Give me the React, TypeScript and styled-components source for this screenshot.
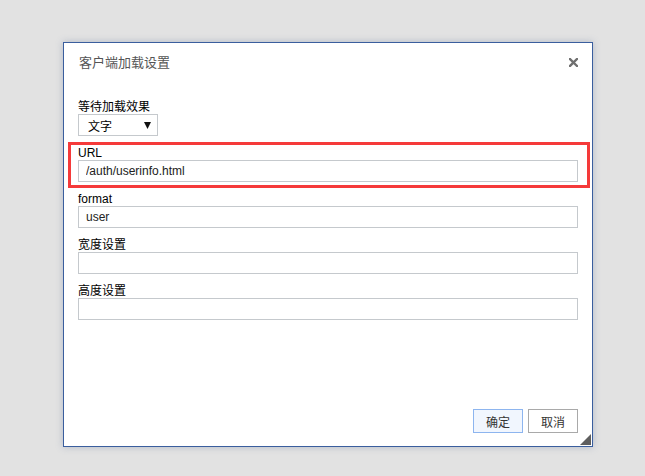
import React from 'react';
import styled, { createGlobalStyle } from 'styled-components';

const GlobalStyle = createGlobalStyle`
  html, body {
    margin: 0;
    padding: 0;
    background: #e2e2e2;
  }
  body {
    width: 645px;
    height: 476px;
    overflow: hidden;
    font-family: "Liberation Sans", Arial, "Noto Sans CJK SC", sans-serif;
  }
`;

const Page = styled.div`
  padding: 42px 0 0 63px;
`;

const Dialog = styled.div`
  position: relative;
  box-sizing: border-box;
  width: 530px;
  height: 405px;
  background: #fff;
  border: 1px solid #3a5e9e;
  box-shadow: 0 0 7px rgba(90, 110, 150, 0.35);
  display: flex;
  flex-direction: column;
`;

const Header = styled.div`
  display: flex;
  align-items: center;
  justify-content: space-between;
  height: 36px;
  padding: 0 14px 0 15px;
`;

const Title = styled.span`
  font-family: "Noto Sans CJK SC", sans-serif;
  font-size: 13px;
  color: #555;
`;

const Close = styled.svg`
  margin-top: 2px;
  cursor: pointer;
`;

const Body = styled.div`
  flex: 1;
  display: flex;
  flex-direction: column;
  gap: 10px;
  padding: 21px 14px 0 14px;
`;

const Group = styled.div<{ $highlight?: boolean }>`
  position: relative;
  display: flex;
  flex-direction: column;

  ${(p) =>
    p.$highlight &&
    `
    &::before {
      content: '';
      position: absolute;
      top: -4px;
      left: -10px;
      right: -12px;
      bottom: -6px;
      border: 3px solid #f53a3a;
      pointer-events: none;
    }
  `}
`;

const Label = styled.label`
  font-family: "Liberation Sans", Arial, "Noto Sans CJK SC", sans-serif;
  font-size: 12px;
  line-height: 14px;
  height: 14px;
  color: #000;
  white-space: nowrap;
`;

const Input = styled.input`
  box-sizing: border-box;
  width: 500px;
  height: 22px;
  margin: 0;
  padding: 0 7px;
  border: 1px solid #c5c9cd;
  border-radius: 0;
  background: #fff;
  font-family: "Liberation Sans", Arial, sans-serif;
  font-size: 12px;
  color: #222;
  outline: none;
`;

const Select = styled.div`
  box-sizing: border-box;
  width: 80px;
  height: 22px;
  border: 1px solid #c5c9cd;
  display: flex;
  align-items: center;
  justify-content: space-between;
  padding: 0 6px 0 9px;
  font-family: "Noto Sans CJK SC", sans-serif;
  font-size: 12px;
  color: #000;
`;

const Arrow = styled.svg`
  margin-top: 1px;
`;

const Footer = styled.div`
  display: flex;
  justify-content: flex-end;
  gap: 5px;
  padding: 0 14px 13px 0;
`;

const Button = styled.button<{ $primary?: boolean }>`
  box-sizing: border-box;
  width: 50px;
  height: 24px;
  margin: 0;
  padding: 0;
  font-family: "Noto Sans CJK SC", sans-serif;
  font-size: 12px;
  color: #333;
  background: ${(p) => (p.$primary ? '#f1f6fe' : '#fff')};
  border: 1px solid ${(p) => (p.$primary ? '#8db5ef' : '#a9a9a9')};
  border-radius: 0;
  cursor: pointer;
`;

const Grip = styled.svg`
  position: absolute;
  right: 1px;
  bottom: 1px;
`;

const App: React.FC = () => {
  return (
    <Page>
      <GlobalStyle />
      <Dialog>
        <Header>
          <Title>客户端加载设置</Title>
          <Close width="9" height="9" viewBox="0 0 9 9">
            <path d="M1 1 L8 8 M8 1 L1 8" stroke="#6f6f6f" strokeWidth="2.4" strokeLinecap="square" />
          </Close>
        </Header>
        <Body>
          <Group>
            <Label>等待加载效果</Label>
            <Select>
              <span>文字</span>
              <Arrow width="7" height="7" viewBox="0 0 7 7">
                <polygon points="0,0 7,0 3.5,7" fill="#111" />
              </Arrow>
            </Select>
          </Group>
          <Group $highlight>
            <Label>URL</Label>
            <Input defaultValue="/auth/userinfo.html" />
          </Group>
          <Group>
            <Label>format</Label>
            <Input defaultValue="user" />
          </Group>
          <Group>
            <Label>宽度设置</Label>
            <Input defaultValue="" />
          </Group>
          <Group>
            <Label>高度设置</Label>
            <Input defaultValue="" />
          </Group>
        </Body>
        <Footer>
          <Button $primary>确定</Button>
          <Button>取消</Button>
        </Footer>
        <Grip width="11" height="11" viewBox="0 0 11 11">
          <polygon points="11,0 11,11 0,11" fill="#5f5f5f" />
        </Grip>
      </Dialog>
    </Page>
  );
};

export default App;
